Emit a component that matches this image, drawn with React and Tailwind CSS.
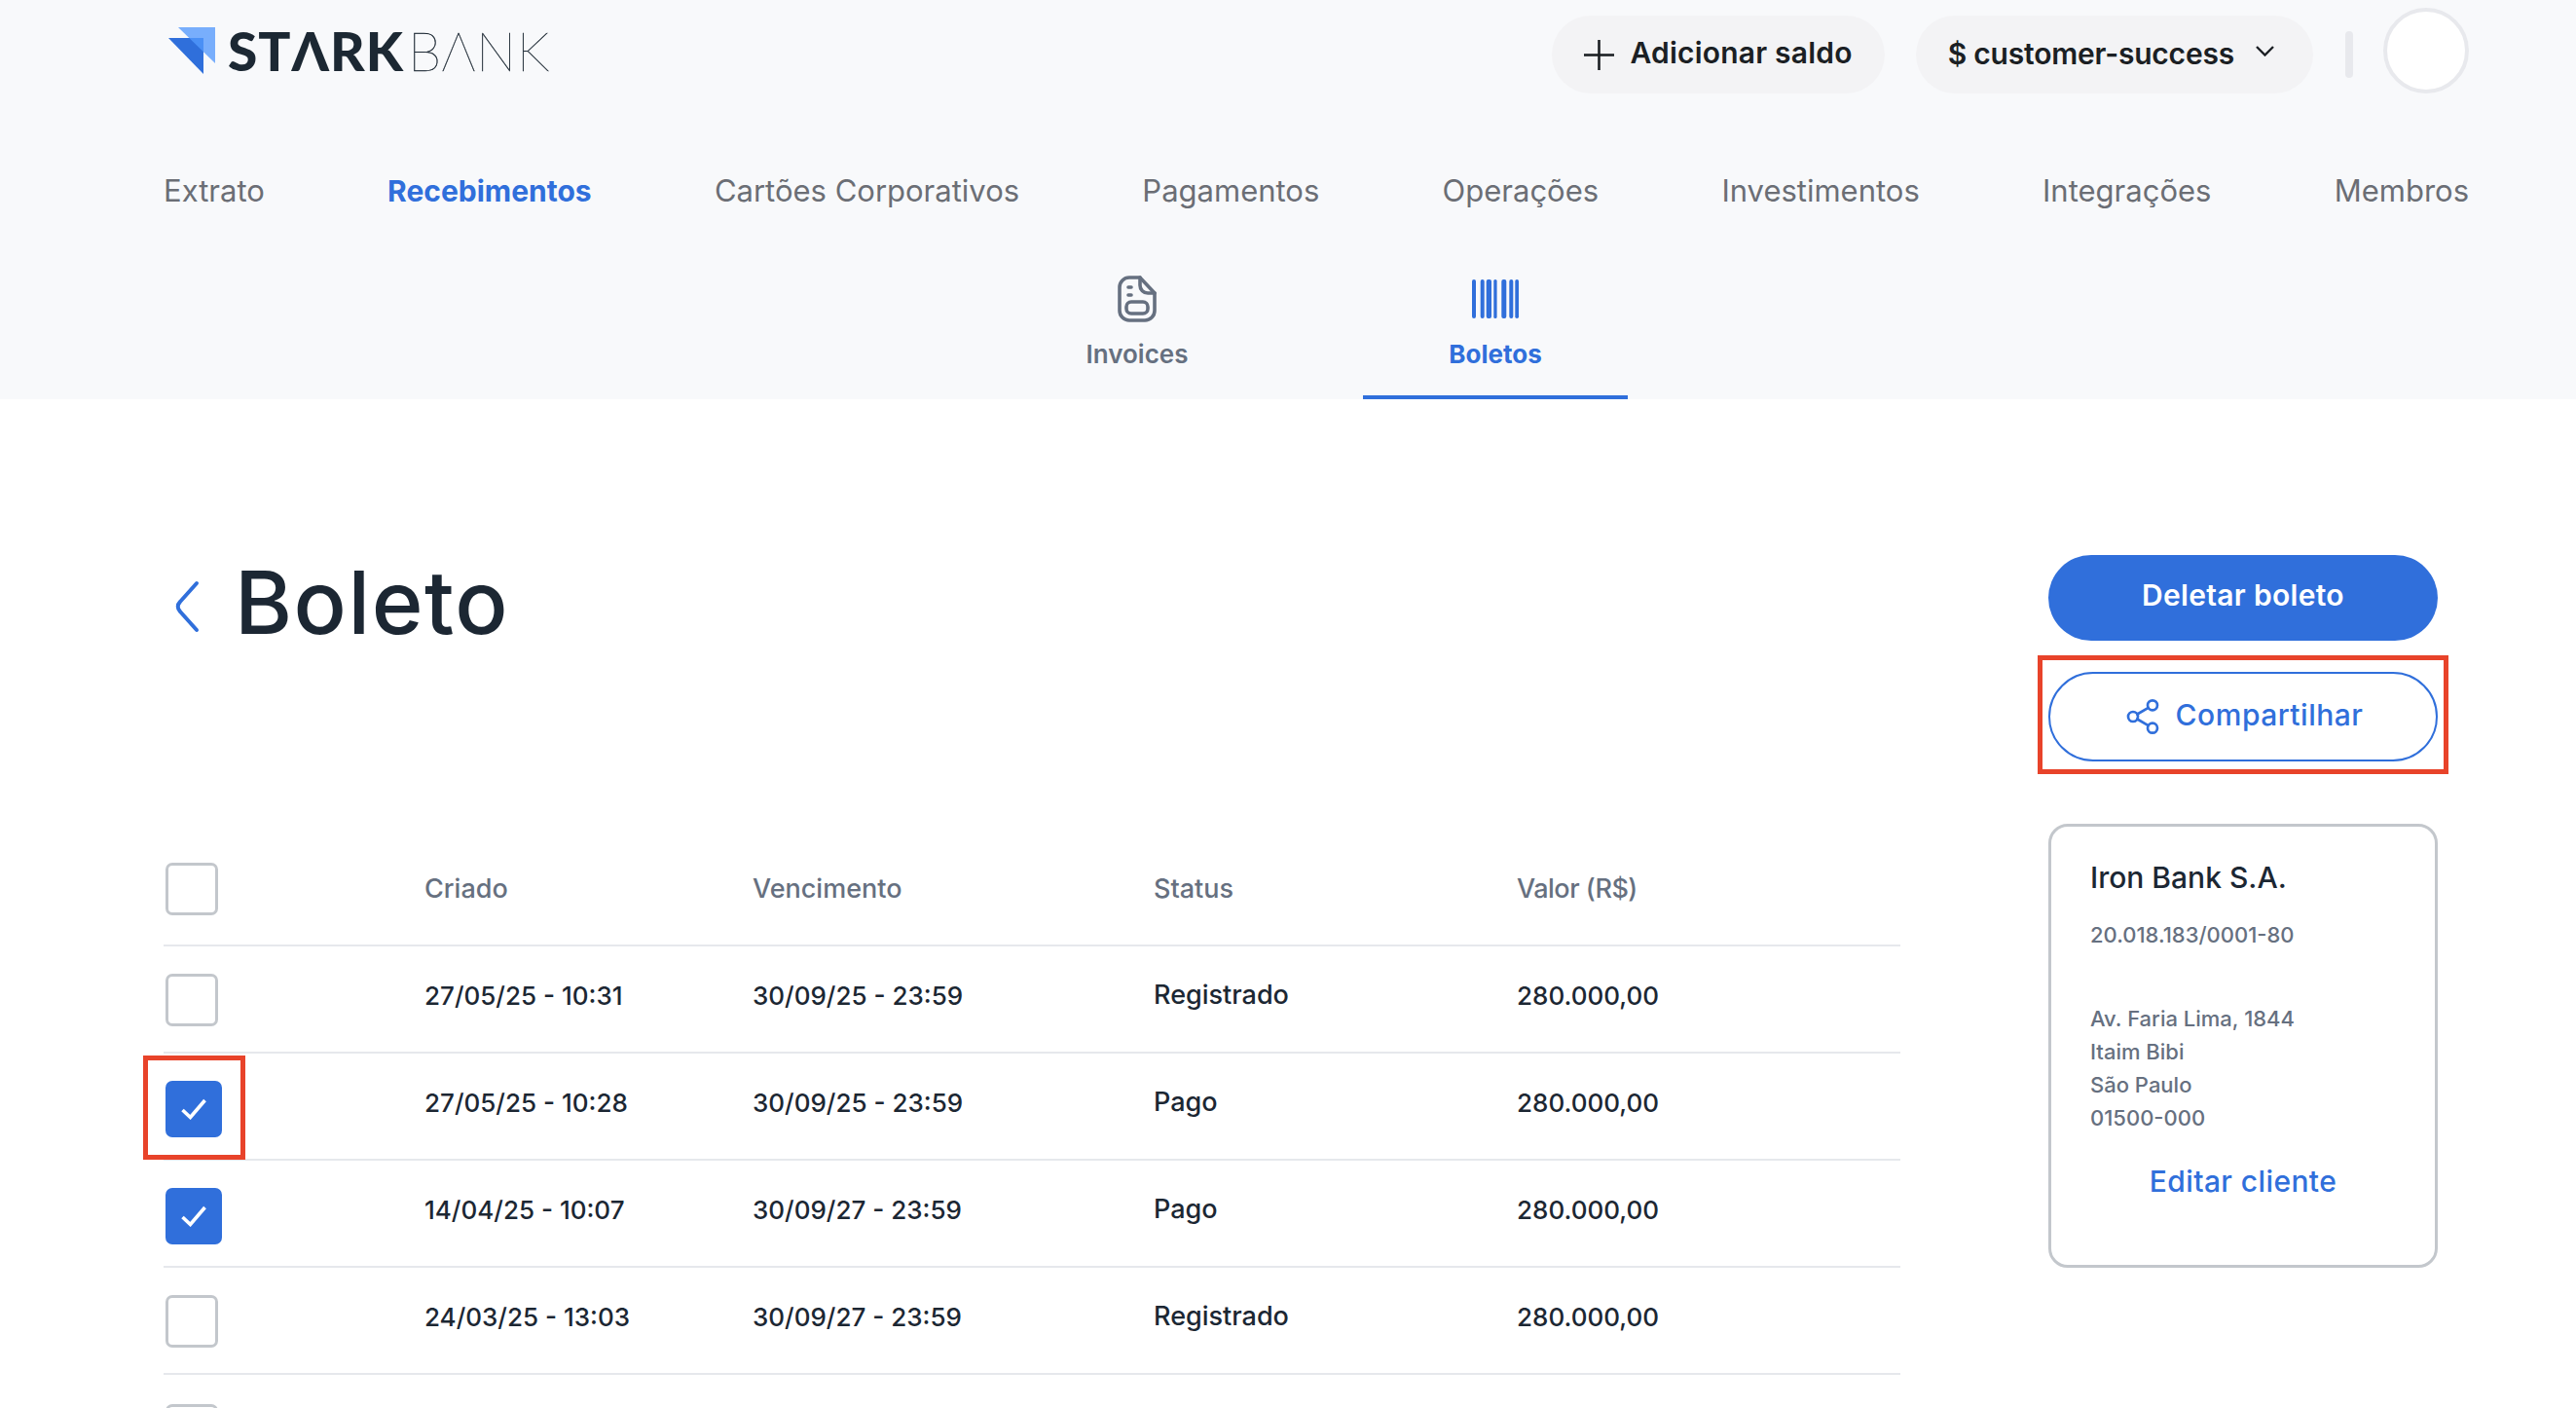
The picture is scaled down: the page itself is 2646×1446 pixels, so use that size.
import React from 'react';
import { Share2 } from 'lucide-react';

const NAV = ['Extrato', 'Recebimentos', 'Cartões Corporativos', 'Pagamentos', 'Operações', 'Investimentos', 'Integrações', 'Membros'];
const ROWS = [
  { created: '27/05/25 - 10:31', due: '30/09/25 - 23:59', status: 'Registrado', checked: false },
  { created: '27/05/25 - 10:28', due: '30/09/25 - 23:59', status: 'Pago', checked: true, marked: true },
  { created: '14/04/25 - 10:07', due: '30/09/27 - 23:59', status: 'Pago', checked: true },
  { created: '24/03/25 - 13:03', due: '30/09/27 - 23:59', status: 'Registrado', checked: false },
];
const COL_CHECK = 'w-[268px] shrink-0 pl-[2px]';
const COL_DUE = 'w-[412px] shrink-0';
const COL_STATUS = 'w-[373px] shrink-0';
const COL_CREATED = 'w-[337px] shrink-0';
const RED = 'pointer-events-none absolute border-[5px] border-[#e8432a]';

function Logo() {
  return (
    <div className="flex items-center" aria-label="Stark Bank">
      <svg width="48" height="48" viewBox="173 28 48 48" className="ml-[5px]">
        <polygon points="183,28 221,28 221,65" fill="#78aefc" />
        <polygon points="173,39 209,39 209,76" fill="#2f6fdb" />
        <polygon points="194.3,39 209,39 209,53.3" fill="#4a90f5" />
      </svg>
      <span className="ml-[13px] text-[55px] leading-[56px] font-black tracking-[1px] text-[#1c2833] [font-family:Lato,sans-serif]">STΛRK</span>
      <span className="ml-[4px] text-[55px] leading-[56px] font-thin tracking-[0.5px] text-[#1c2833] [-webkit-text-stroke:0.4px_#1c2833] [font-family:Lato,sans-serif]">BΛNK</span>
    </div>
  );
}

function Checkbox({ checked, marked }) {
  if (!checked) return <div className="h-[54px] w-[54px] rounded-[7px] border-[3px] border-[#c3c7cc] bg-white" />;
  return (
    <div className="relative mt-[4px] flex h-[58px] w-[58px] items-center justify-center rounded-[7px] bg-[#306fdb]">
      <svg width="26" height="22" viewBox="0 0 26 22" fill="none" stroke="white" strokeWidth="3.6">
        <polyline points="1.5,12 9.5,19.5 24.5,2" />
      </svg>
      {marked && <div className={`${RED} -top-[26px] -left-[23px] h-[107px] w-[105px]`} />}
    </div>
  );
}

export default function App() {
  return (
    <div className="h-[1446px] overflow-hidden bg-white [font-family:Inter,sans-serif]">
      <header className="h-[410px] bg-[#f8f9fb] pl-[168px] pr-[110px]">
        <div className="flex h-[104px] items-center justify-between">
          <Logo />
          <div className="flex items-center">
            <button className="mt-[8px] flex h-[80px] items-center gap-[17px] rounded-full bg-[#f3f3f5] px-[33px] text-[30px] font-semibold tracking-[0.2px] text-[#1b1f24]">
              <svg width="31" height="31" viewBox="0 0 31 31" stroke="#1b1f24" strokeWidth="2.6">
                <line x1="0" y1="15.5" x2="31" y2="15.5" />
                <line x1="15.5" y1="0" x2="15.5" y2="31" />
              </svg>
              <span className="-mt-[3px]">Adicionar saldo</span>
            </button>
            <button className="mt-[8px] ml-[32px] flex h-[80px] items-center gap-[22px] rounded-full bg-[#f3f3f5] pl-[33px] pr-[40px] text-[30px] font-semibold tracking-[-0.2px] text-[#1b1f24]">
              <span className="-mt-[2px]">$ customer-success</span>
              <svg width="19" height="11" viewBox="0 0 19 11" fill="none" stroke="#1b1f24" strokeWidth="2.4" className="-mt-[8px]">
                <polyline points="1,1 9.5,9.5 18,1" />
              </svg>
            </button>
            <div className="mt-[8px] ml-[33px] h-[48px] w-[8px] rounded-full bg-[#e8e9ed]" />
            <div className="ml-[31px] h-[88px] w-[88px] rounded-full border-[4px] border-[#e8e9ed] bg-white" />
          </div>
        </div>
        <nav className="mt-[72px] flex h-[40px] items-center justify-between text-[31px] text-[#6b6e75]">
          {NAV.map((n) => (
            <a key={n} className={n === 'Recebimentos' ? 'text-[30px] font-bold text-[#306fdb]' : ''}>{n}</a>
          ))}
        </nav>
        <div className="mt-[54px] flex justify-center gap-[96px]">
          <div className="flex h-[140px] w-[272px] flex-col items-center pt-[13px] text-[#667080]">
            <svg width="40" height="48" viewBox="0 0 40 48" fill="none" stroke="#667080" strokeWidth="3.6" strokeLinecap="round">
              <path d="M13 2H23L38 18V36A10 10 0 0 1 28 46H12A10 10 0 0 1 2 36V12A10 10 0 0 1 12 2Z" />
              <path d="M23 2V10A8 8 0 0 0 31 18H38" />
              <path d="M11 12H14M11 20H14" />
              <rect x="9" y="27" width="22" height="12" rx="5" />
            </svg>
            <span className="mt-[17px] text-[26px] leading-[32px] font-semibold">Invoices</span>
          </div>
          <div className="flex h-[140px] w-[272px] flex-col items-center border-b-[4px] border-[#306fdb] pt-[13px] text-[#306fdb]">
            <svg width="48" height="48" viewBox="0 0 48 48" fill="#306fdb">
              <rect x="0" y="4" width="4" height="40" rx="2" />
              <rect x="8.7" y="4" width="4" height="40" rx="2" />
              <rect x="14.7" y="4" width="5.3" height="40" rx="2" />
              <rect x="22.3" y="4" width="3.3" height="40" rx="1.6" />
              <rect x="30.3" y="4" width="5" height="40" rx="2" />
              <rect x="38.3" y="4" width="4" height="40" rx="2" />
              <rect x="44.3" y="4" width="3.7" height="40" rx="1.8" />
            </svg>
            <span className="mt-[17px] text-[26px] leading-[32px] font-bold">Boletos</span>
          </div>
        </div>
      </header>

      <main className="flex pl-[168px] pr-[142px]">
        <div className="w-[1784px] shrink-0">
          <div className="mt-[150px] flex h-[120px] items-center">
            <svg width="26" height="54" viewBox="0 0 26 54" fill="none" stroke="#306fdb" strokeWidth="4" strokeLinecap="round" className="ml-[11px] mt-[6px]">
              <path d="M23 3L6 22C3 25 3 29 6 32L23 51" />
            </svg>
            <h1 className="-mt-[2px] ml-[36px] text-[90px] leading-[100px] font-medium tracking-[1.5px] text-[#1c2733]">Boleto</h1>
          </div>
          <div className="mt-[182px]">
            <div className="flex h-[110px] items-center border-b-[2px] border-[#e6e8ec] pb-[6px] text-[27px] font-medium text-[#667080]">
              <div className={COL_CHECK}><Checkbox /></div>
              <div className={COL_CREATED}>Criado</div>
              <div className={COL_DUE}>Vencimento</div>
              <div className={COL_STATUS}>Status</div>
              <div className="tracking-[-0.5px]">Valor (R$)</div>
            </div>
            {ROWS.map((r) => (
              <div key={r.created} className="flex h-[110px] items-center border-b-[2px] border-[#e6e8ec] pb-[7px] text-[26px] font-medium text-[#1c2733]">
                <div className={`${COL_CHECK} pt-[9px]`}><Checkbox checked={r.checked} marked={r.marked} /></div>
                <div className={COL_CREATED}>{r.created}</div>
                <div className={COL_DUE}>{r.due}</div>
                <div className={`${COL_STATUS} text-[27px]`}>{r.status}</div>
                <div>280.000,00</div>
              </div>
            ))}
            <div className={`${COL_CHECK} pt-[30px]`}><Checkbox /></div>
          </div>
        </div>

        <aside className="ml-[152px] w-[400px] shrink-0 pt-[160px]">
          <button className="h-[88px] w-full rounded-full bg-[#306fdb] pb-[5px] text-[30px] font-semibold tracking-[0.3px] text-white">Deletar boleto</button>
          <div className="relative mt-[32px]">
            <button className="flex h-[92px] w-full items-center justify-center gap-[14px] rounded-full border-[2px] border-[#306fdb] text-[30px] font-medium tracking-[0.5px] text-[#306fdb]">
              <Share2 size={40} strokeWidth={1.6} />
              <span className="-mt-[3px]">Compartilhar</span>
            </button>
            <div className={`${RED} -left-[11px] -right-[11px] -top-[17px] -bottom-[13px]`} />
          </div>
          <div className="mt-[64px] h-[456px] rounded-[20px] border-[3px] border-[#c3c7cc] px-[40px] pt-[32px]">
            <p className="text-[30px] leading-[40px] font-medium text-[#1c2733]">Iron Bank S.A.</p>
            <p className="mt-[22px] text-[22px] leading-[34px] font-medium text-[#667080]">20.018.183/0001-80</p>
            <div className="mt-[52px] text-[22px] leading-[34px] font-medium text-[#667080]">
              <p>Av. Faria Lima, 1844</p>
              <p>Itaim Bibi</p>
              <p>São Paulo</p>
              <p>01500-000</p>
            </div>
            <p className="mt-[28px] text-center text-[30px] leading-[40px] font-medium tracking-[0.4px] text-[#306fdb]">Editar cliente</p>
          </div>
        </aside>
      </main>
    </div>
  );
}
